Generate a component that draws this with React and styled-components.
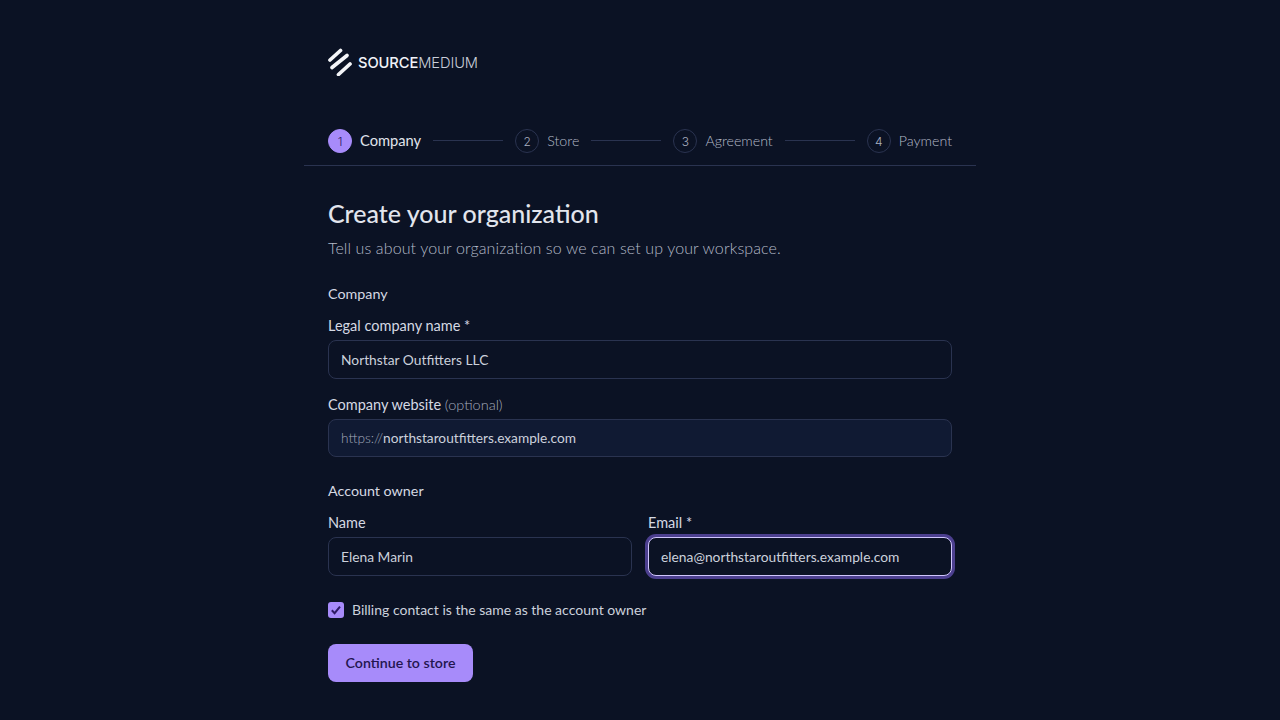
import React from "react";
import styled, { createGlobalStyle } from "styled-components";

const GlobalStyle = createGlobalStyle`
  html, body {
    margin: 0;
    background: #0b1224;
    font-family: "Lato", "Noto Sans", sans-serif;
  }
`;

const Page = styled.div`
  width: 672px;
  height: 720px;
  margin: 0 auto;
  display: flex;
  flex-direction: column;
`;

const Brand = styled.div`
  height: 28px;
  margin: 48px 24px 0;
  display: flex;
  align-items: center;
  gap: 6px;
`;

const Wordmark = styled.div`
  margin-top: 2px;
  font-family: "Inter", sans-serif;
  font-size: 14.7px;
  letter-spacing: -0.1px;
  font-weight: 500;
  color: #f1f3f8;
  span {
    font-weight: 300;
    color: #c9ced9;
  }
`;

const Stepper = styled.div`
  margin-top: 53px;
  height: 37px;
  padding: 0 24px;
  box-sizing: border-box;
  border-bottom: 1px solid #2a3350;
  display: flex;
  align-items: flex-start;
  justify-content: space-between;
`;

const Step = styled.div`
  display: flex;
  align-items: center;
  gap: 8px;
  height: 24px;
  font-size: ${(p) => (p.$active ? "14.7px" : "14.2px")};
  font-weight: ${(p) => (p.$active ? 400 : 300)};
  color: ${(p) => (p.$active ? "#e0e4ec" : "#b4bac8")};
`;

const StepName = styled.span`
  margin-top: -2px;
`;

const StepDot = styled.div`
  width: 24px;
  height: 24px;
  box-sizing: border-box;
  border-radius: 50%;
  display: flex;
  align-items: center;
  justify-content: center;
  font-family: "Inter", sans-serif;
  font-size: 12px;
  font-weight: 300;
  background: ${(p) => (p.$active ? "#a78bfa" : "transparent")};
  border: 1px solid ${(p) => (p.$active ? "#a78bfa" : "#2a3350")};
  color: ${(p) => (p.$active ? "#2e1a66" : "#aab0c0")};
`;

const StepLine = styled.div`
  width: 70px;
  height: 1px;
  margin-top: 11px;
  background: #2a3350;
`;

const Body = styled.div`
  padding: 0 24px;
  display: flex;
  flex-direction: column;
`;

const Title = styled.h1`
  margin: 31px 0 0;
  font-size: 25px;
  line-height: 32px;
  font-weight: 500;
  color: #e2e5ed;
`;

const Subtitle = styled.p`
  margin: 7px 0 0;
  font-size: 16px;
  line-height: 24px;
  font-weight: 300;
  letter-spacing: 0.11px;
  color: #b4bac8;
`;

const SectionLabel = styled.div`
  margin-top: ${(p) => p.$top}px;
  font-size: 14.3px;
  line-height: 20px;
  color: #d5d9e3;
`;

const Field = styled.label`
  display: flex;
  flex-direction: column;
  flex: 1;
  margin-top: ${(p) => p.$top || 0}px;
`;

const FieldLabel = styled.span`
  font-size: 14.5px;
  line-height: 20px;
  margin-bottom: 4px;
  color: #d5d9e3;
  em {
    font-style: normal;
    font-weight: 300;
    color: #a3aabb;
  }
`;

const Input = styled.input`
  height: 39px;
  box-sizing: border-box;
  padding: 0 12px;
  width: 100%;
  border-radius: 8px;
  border: 1px solid ${(p) => (p.$focus ? "#cfc5fc" : "#2a3350")};
  background: #0b1224;
  box-shadow: ${(p) => (p.$focus ? "0 0 0 3px #4c3f8f" : "none")};
  color: #ccd1dc;
  font: 13.8px "Lato", sans-serif;
  outline: none;
`;

const PrefixBox = styled.div`
  height: 38px;
  box-sizing: border-box;
  padding: 0 12px 2px;
  display: flex;
  align-items: center;
  border-radius: 8px;
  border: 1px solid #2a3350;
  background: #101a33;
  font-size: 13.7px;
  color: #ccd1dc;
  span {
    font-weight: 300;
    color: #a3aabb;
  }
`;

const Row = styled.div`
  margin-top: 12px;
  display: flex;
  gap: 16px;
`;

const CheckRow = styled.div`
  margin-top: 26px;
  display: flex;
  align-items: center;
  gap: 8px;
  font-size: 14px;
  line-height: 16px;
  color: #ccd1dc;
`;

const CheckBox = styled.div`
  width: 16px;
  height: 16px;
  border-radius: 3px;
  background: #a78bfa;
  display: flex;
  align-items: center;
  justify-content: center;
`;

const Submit = styled.button`
  align-self: flex-start;
  margin-top: 26px;
  padding: 0 0 2px;
  width: 145px;
  height: 38px;
  border: none;
  border-radius: 8px;
  background: #a78bfa;
  color: #23154f;
  font: 600 14.2px "Lato", sans-serif;
`;

const steps = ["Company", "Store", "Agreement", "Payment"];

const App = () => {
  return (
    <Page>
      <GlobalStyle />
      <Brand>
        <svg width="24" height="28" viewBox="0 0 24 28" fill="none" stroke="#f4f5f8" strokeWidth="3.7" strokeLinecap="round">
          <path d="M2 12 12.5 2.5" />
          <path d="M4 19.5 19 7.5" />
          <path d="M10.5 26.5 22 16" />
        </svg>
        <Wordmark>
          SOURCE<span>MEDIUM</span>
        </Wordmark>
      </Brand>

      <Stepper>
        {steps.map((name, i) => (
          <React.Fragment key={name}>
            {i > 0 && <StepLine />}
            <Step $active={i === 0}>
              <StepDot $active={i === 0}>{i + 1}</StepDot>
              <StepName>{name}</StepName>
            </Step>
          </React.Fragment>
        ))}
      </Stepper>

      <Body>
        <Title>Create your organization</Title>
        <Subtitle>Tell us about your organization so we can set up your workspace.</Subtitle>

        <SectionLabel $top={24}>Company</SectionLabel>
        <Field $top={12}>
          <FieldLabel>Legal company name *</FieldLabel>
          <Input defaultValue="Northstar Outfitters LLC" />
        </Field>
        <Field $top={16}>
          <FieldLabel>
            Company website <em>(optional)</em>
          </FieldLabel>
          <PrefixBox>
            <span>https://</span>northstaroutfitters.example.com
          </PrefixBox>
        </Field>

        <SectionLabel $top={24}>Account owner</SectionLabel>
        <Row>
          <Field>
            <FieldLabel>Name</FieldLabel>
            <Input defaultValue="Elena Marin" />
          </Field>
          <Field>
            <FieldLabel>Email *</FieldLabel>
            <Input $focus defaultValue="elena@northstaroutfitters.example.com" />
          </Field>
        </Row>

        <CheckRow>
          <CheckBox>
            <svg width="12" height="12" viewBox="0 0 12 12" fill="none" stroke="#2e1a66" strokeWidth="2">
              <path d="M1.8 6.3 4.6 9.2 10 2.6" />
            </svg>
          </CheckBox>
          Billing contact is the same as the account owner
        </CheckRow>

        <Submit>Continue to store</Submit>
      </Body>
    </Page>
  );
};

export default App;
